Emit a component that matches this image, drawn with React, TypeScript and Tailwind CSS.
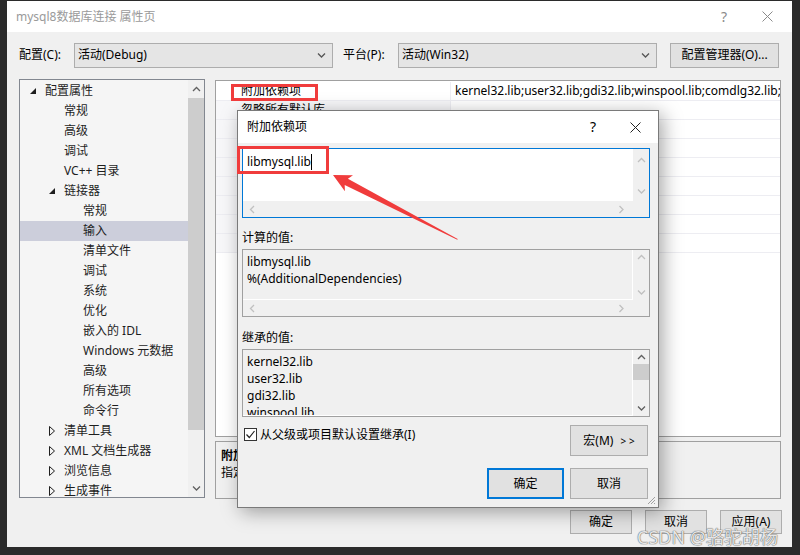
import React from 'react';

const font = "font-['Noto_Sans','Noto_Sans_CJK_SC',sans-serif]";

type Dir = 'up' | 'down' | 'left' | 'right';

function Chevron({ dir, color = '#a6a6a6' }: { dir: Dir; color?: string }) {
  const paths: Record<Dir, string> = {
    up: 'M1 5 L4.5 1.5 L8 5',
    down: 'M1 1.5 L4.5 5 L8 1.5',
    left: 'M5 1 L1.5 4.5 L5 8',
    right: 'M1.5 1 L5 4.5 L1.5 8',
  };
  const vertical = dir === 'up' || dir === 'down';
  return (
    <svg width={vertical ? 9 : 7} height={vertical ? 7 : 9} viewBox={vertical ? '0 0 9 7' : '0 0 7 9'}>
      <path d={paths[dir]} fill="none" stroke={color} strokeWidth="1.3" />
    </svg>
  );
}

function CloseX({ color }: { color: string }) {
  return (
    <svg width="11" height="11" viewBox="0 0 11 11">
      <path d="M0.5 0.5 L10.5 10.5 M10.5 0.5 L0.5 10.5" stroke={color} strokeWidth="1" />
    </svg>
  );
}

const tree = [
  { t: '配置属性', lvl: 0, exp: 'open' },
  { t: '常规', lvl: 1 },
  { t: '高级', lvl: 1 },
  { t: '调试', lvl: 1 },
  { t: 'VC++ 目录', lvl: 1 },
  { t: '链接器', lvl: 1, exp: 'open' },
  { t: '常规', lvl: 2 },
  { t: '输入', lvl: 2, sel: true },
  { t: '清单文件', lvl: 2 },
  { t: '调试', lvl: 2 },
  { t: '系统', lvl: 2 },
  { t: '优化', lvl: 2 },
  { t: '嵌入的 IDL', lvl: 2 },
  { t: 'Windows 元数据', lvl: 2 },
  { t: '高级', lvl: 2 },
  { t: '所有选项', lvl: 2 },
  { t: '命令行', lvl: 2 },
  { t: '清单工具', lvl: 1, exp: 'closed' },
  { t: 'XML 文档生成器', lvl: 1, exp: 'closed' },
  { t: '浏览信息', lvl: 1, exp: 'closed' },
  { t: '生成事件', lvl: 1, exp: 'closed' },
];

const indent = ['pl-[10px]', 'pl-[29px]', 'pl-[48px]'];

const props = [
  { name: '附加依赖项', value: 'kernel32.lib;user32.lib;gdi32.lib;winspool.lib;comdlg32.lib;advapi32.lib;shell32.lib' },
  { name: '忽略所有默认库', value: '' },
  { name: '忽略特定默认库', value: '' },
  { name: '模块定义文件', value: '' },
  { name: '将模块添加到程序集', value: '' },
  { name: '嵌入托管资源文件', value: '' },
  { name: '强制符号引用', value: '' },
  { name: '延迟加载的 DLL', value: '' },
  { name: '程序集链接资源', value: '' },
];

function Select({ label }: { label: string }) {
  return (
    <div className="w-[259px] h-[25px] border border-[#adadad] bg-[#e5e5e5] flex items-center pl-[3px] pr-[6px]">
      <span>{label}</span>
      <span className="ml-auto">
        <Chevron dir="down" color="#555" />
      </span>
    </div>
  );
}

function ListBox({ lines, enabled }: { lines: string[]; enabled?: boolean }) {
  return (
    <div className="h-[68px] border border-[#a0a0a0] bg-[#f0f0f0] flex flex-col">
      <div className="flex flex-1 min-h-0">
        <div className="flex-1 border-r border-b border-white pl-[4px] pt-[3px] leading-[17px] overflow-hidden">
          {lines.map((l, i) => (
            <div key={i}>{l}</div>
          ))}
        </div>
        <div className="w-[16px] flex flex-col items-center pt-[4px] pb-[4px]">
          <Chevron dir="up" color={enabled ? '#606060' : '#c0c0c0'} />
          {enabled && <div className="mt-[3px] w-[16px] h-[16px] bg-[#cdcdcd]" />}
          <div className="mt-auto">
            <Chevron dir="down" color={enabled ? '#606060' : '#c0c0c0'} />
          </div>
        </div>
      </div>
      {!enabled && (
        <div className="h-[16px] flex items-center pl-[6px] pr-[24px]">
          <Chevron dir="left" color="#c0c0c0" />
          <span className="ml-auto">
            <Chevron dir="right" color="#c0c0c0" />
          </span>
        </div>
      )}
    </div>
  );
}

export default function App() {
  return (
    <div className={`relative w-[800px] h-[555px] overflow-hidden bg-[#2b2b2b] ${font} text-[12px] text-black leading-none`}>
      <div className="ml-[7px] mt-[1px] w-[785px] h-[546px] bg-[#f0f0f0] flex flex-col">
        {/* title bar */}
        <div className="h-[31px] shrink-0 bg-white flex items-center pl-[9px] pr-[19px]">
          <span className="text-[#9a9a9a]">mysql8数据库连接 属性页</span>
          <span className="ml-auto text-[14px] text-[#8a8a8a]">?</span>
          <span className="ml-[35px]">
            <CloseX color="#8a8a8a" />
          </span>
        </div>

        {/* configuration row */}
        <div className="mt-[10px] h-[26px] shrink-0 flex items-center pl-[12px]">
          <span className="w-[55px]">配置(C):</span>
          <Select label="活动(Debug)" />
          <span className="ml-[10px] w-[55px]">平台(P):</span>
          <Select label="活动(Win32)" />
          <button className="ml-[13px] w-[109px] h-[25px] border border-[#adadad] bg-[#e1e1e1]">配置管理器(O)...</button>
        </div>

        {/* content */}
        <div className="mt-[11px] h-[421px] shrink-0 flex pl-[12px]">
          {/* tree */}
          <div className="w-[186px] h-[419px] border border-[#828790] bg-[#f5f5f5] flex">
            <div className="flex-1 pt-[1px] overflow-hidden">
              {tree.map((n, i) => (
                <div
                  key={i}
                  className={`h-[20px] flex items-center ${indent[n.lvl]} ${n.sel ? 'bg-[#cccedb]' : ''}`}
                >
                  <span className="w-[15px] flex items-center">
                    {n.exp === 'open' && (
                      <svg width="6" height="6" viewBox="0 0 6 6">
                        <path d="M6 0 L6 6 L0 6 Z" fill="#1e1e1e" />
                      </svg>
                    )}
                    {n.exp === 'closed' && (
                      <svg width="6" height="10" viewBox="0 0 6 10">
                        <path d="M0.5 0.5 L5.5 5 L0.5 9.5 Z" fill="none" stroke="#1e1e1e" strokeWidth="1" />
                      </svg>
                    )}
                  </span>
                  <span className="whitespace-nowrap text-[#1e1e1e]">{n.t}</span>
                </div>
              ))}
            </div>
            <div className="w-[16px] bg-[#f0f0f0] flex flex-col items-center">
              <div className="h-[18px] flex items-center">
                <Chevron dir="up" color="#606060" />
              </div>
              <div className="w-[16px] h-[332px] bg-[#cdcdcd]" />
              <div className="mt-auto h-[18px] flex items-center">
                <Chevron dir="down" color="#606060" />
              </div>
            </div>
          </div>

          {/* right side */}
          <div className="ml-[10px] w-[566px] flex flex-col">
            <div className="mt-[1px] h-[357px] border border-[#a0a0a0] bg-white pt-[1px]">
              {props.map((p, i) => (
                <div key={i} className="h-[19px] flex border-b border-[#ededf2]">
                  <div className={`w-[235px] h-full flex items-center pl-[25px] border-r border-[#ededf2] ${i === 0 ? 'bg-white' : 'bg-[#f7f7f9]'}`}>
                    <span className="whitespace-nowrap">{p.name}</span>
                  </div>
                  <div className="flex-1 h-full flex items-center pl-[4px] overflow-hidden">
                    <span className="whitespace-nowrap">{p.value}</span>
                  </div>
                </div>
              ))}
            </div>
            <div className="mt-[4px] h-[58px] border border-[#a0a0a0] bg-[#f0f0f0] pl-[5px] pt-[5px] leading-[17px]">
              <div className="font-bold">附加依赖项</div>
              <div>指定要添加到链接命令行的附加项。[例如 kernel32.lib]</div>
            </div>
          </div>
        </div>

        {/* bottom buttons */}
        <div className="mt-[10px] flex justify-end gap-[13px] pr-[10px]">
          <button className="w-[62px] h-[24px] border border-[#adadad] bg-[#e1e1e1]">确定</button>
          <button className="w-[62px] h-[24px] border border-[#adadad] bg-[#e1e1e1]">取消</button>
          <button className="w-[62px] h-[24px] border border-[#adadad] bg-[#e1e1e1]">应用(A)</button>
        </div>
      </div>

      {/* modal dialog */}
      <div className="absolute left-[237px] top-[110px] w-[422px] h-[398px] border border-[#7a7a7a] bg-[#f0f0f0] shadow-[4px_4px_18px_rgba(0,0,0,0.35)] flex flex-col">
        <div className="h-[32px] shrink-0 bg-white flex items-center pl-[9px] pr-[17px]">
          <span>附加依赖项</span>
          <span className="ml-auto text-[14px]">?</span>
          <span className="ml-[34px]">
            <CloseX color="#222" />
          </span>
        </div>
        <div className="flex-1 flex flex-col pl-[4px] pr-[8px]">
          {/* editable box */}
          <div className="mt-[5px] h-[70px] border border-[#0078d7] bg-[#f0f0f0] flex flex-col">
            <div className="flex h-[52px]">
              <div className="flex-1 bg-white pl-[4px] pt-[4px] flex items-start">
                <span className="leading-[17px]">libmysql.lib</span>
                <span className="w-[1px] h-[16px] bg-black mt-[1px]" />
              </div>
              <div className="w-[16px] flex flex-col items-center pt-[8px] pb-[6px]">
                <Chevron dir="up" color="#c0c0c0" />
                <div className="mt-auto">
                  <Chevron dir="down" color="#c0c0c0" />
                </div>
              </div>
            </div>
            <div className="h-[16px] flex items-center pl-[6px] pr-[24px]">
              <Chevron dir="left" color="#c0c0c0" />
              <span className="ml-auto">
                <Chevron dir="right" color="#c0c0c0" />
              </span>
            </div>
          </div>

          <div className="mt-[12px] h-[15px] flex items-center">计算的值:</div>
          <div className="mt-[4px]">
            <ListBox lines={['libmysql.lib', '%(AdditionalDependencies)']} />
          </div>

          <div className="mt-[13px] h-[15px] flex items-center">继承的值:</div>
          <div className="mt-[4px]">
            <ListBox lines={['kernel32.lib', 'user32.lib', 'gdi32.lib', 'winspool.lib']} enabled />
          </div>

          <div className="mt-[8px] flex items-start">
            <div className="mt-[3px] flex items-center ml-[2px]">
              <span className="w-[13px] h-[13px] border border-[#333] bg-white flex items-center justify-center">
                <svg width="11" height="11" viewBox="0 0 11 11">
                  <path d="M1.5 5.5 L4.3 8.5 L9.5 2" fill="none" stroke="#222" strokeWidth="1.2" />
                </svg>
              </span>
              <span className="ml-[3px]">从父级或项目默认设置继承(I)</span>
            </div>
            <button className="ml-auto mr-[2px] w-[78px] h-[31px] border border-[#adadad] bg-[#e1e1e1]">
              宏(M) <span className="ml-[4px] text-[10px]">&gt; &gt;</span>
            </button>
          </div>

          <div className="mt-[12px] flex justify-end gap-[6px] pr-[2px]">
            <button className="w-[77px] h-[31px] border-2 border-[#0078d7] bg-[#e1e1e1]">确定</button>
            <button className="w-[78px] h-[31px] border border-[#adadad] bg-[#e1e1e1]">取消</button>
          </div>
        </div>
        <svg className="absolute right-[2px] bottom-[2px]" width="10" height="10" viewBox="0 0 10 10">
          <path d="M9 2 L2 9 M9 5 L5 9 M9 8 L8 9" stroke="#a0a0a0" strokeWidth="1" />
        </svg>
      </div>

      {/* red annotations */}
      <div className="absolute left-[231px] top-[84px] w-[87px] h-[17px] border-[3px] border-[#f03c3c]" />
      <div className="absolute left-[237px] top-[146px] w-[92px] h-[28px] border-[3px] border-[#f03c3c]" />
      <svg className="absolute left-0 top-0" width="800" height="555" viewBox="0 0 800 555">
        <path
          d="M333 175 L353 175.3 L347.9 178.8 L457.7 238.9 L457.3 239.7 L344.7 185 L344.9 191.3 Z"
          fill="#f03c3c"
        />
      </svg>

      {/* watermark */}
      <div className="absolute left-[637px] top-[527px] text-[18px] leading-[20px] text-white/85 [text-shadow:0_0_1px_#555,0_0_1px_#555]">
        CSDN @骆驼胡杨
      </div>
    </div>
  );
}
